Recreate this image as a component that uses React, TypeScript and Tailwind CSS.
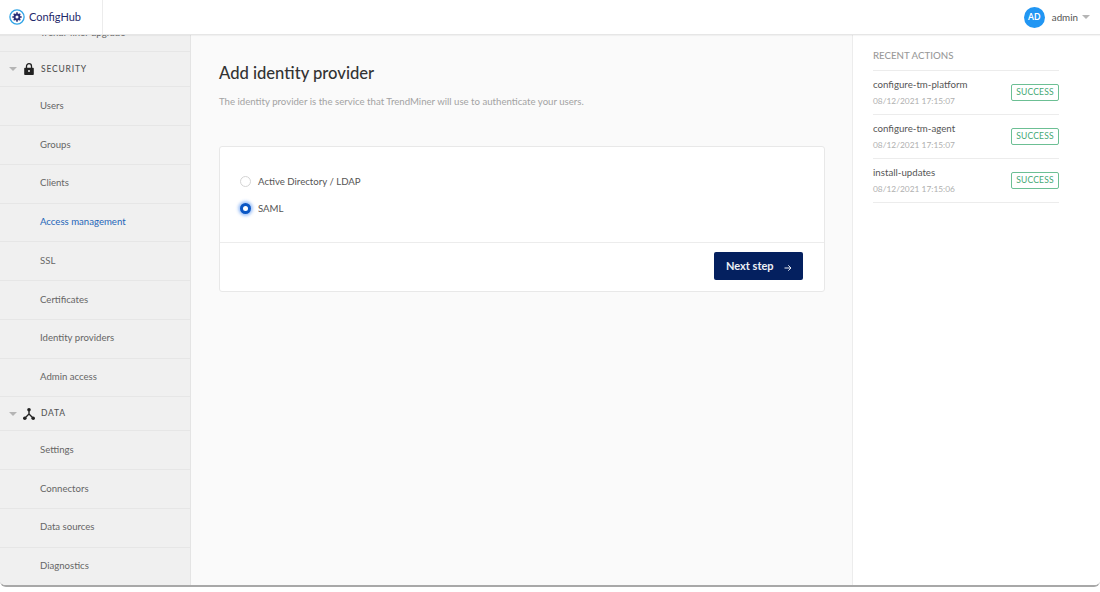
const font = "font-['Lato','Liberation_Sans',sans-serif]";

function Caret() {
  return <span className="h-0 w-0 border-x-[4px] border-t-[4px] border-x-transparent border-t-[#b5b5b5]" />;
}

function LogoIcon() {
  return (
    <svg width="16" height="16" viewBox="0 0 16 16">
      <circle cx="8" cy="8" r="7.100" fill="none" stroke="#2fa4e7" strokeWidth="1.300" />
      <path d="M8 3.300v9.400M3.300 8h9.400M4.700 4.700l6.600 6.600M11.300 4.700l-6.600 6.600" stroke="#2a2f78" strokeWidth="1.500" />
      <circle cx="8" cy="8" r="3.400" fill="#2a2f78" />
      <circle cx="8" cy="8" r="1.500" fill="#fff" />
    </svg>
  );
}

function LockIcon() {
  return (
    <svg width="10" height="12" viewBox="0 0 10 12">
      <path d="M2.500 5V3.200a2.500 2.500 0 0 1 5 0V5" fill="none" stroke="#222" strokeWidth="1.300" />
      <path fillRule="evenodd" d="M1 4.800h8a.8.8 0 0 1 .8.8v5.600a.8.8 0 0 1-.8.8H1a.8.8 0 0 1-.8-.8V5.600a.8.8 0 0 1 .8-.8zM5 7a1 1 0 1 0 0 2 1 1 0 0 0 0-2z" fill="#222" />
    </svg>
  );
}

function DataIcon() {
  return (
    <svg width="12" height="12" viewBox="0 0 12 12">
      <path d="M6 2v4L2 10M6 6l4 4" fill="none" stroke="#222" strokeWidth="1.400" />
      <circle cx="6" cy="1.800" r="1.800" fill="#222" />
      <circle cx="1.800" cy="10.200" r="1.800" fill="#222" />
      <circle cx="10.200" cy="10.200" r="1.800" fill="#222" />
    </svg>
  );
}

function SectionRow({ label, icon, className }: { label: string; icon: React.ReactNode; className: string }) {
  return (
    <div className={`flex items-center border-b border-[#e6e6e6] pl-[9px] ${className}`}>
      <Caret />
      <span className="ml-[4px] flex w-[16px] justify-center">{icon}</span>
      <span className="ml-[4px] text-[8.500px] font-medium tracking-[0.8px] text-[#555]">{label}</span>
    </div>
  );
}

function NavRow({ label, active, className }: { label: string; active?: boolean; className?: string }) {
  return (
    <div
      className={`flex h-[38.750px] items-center border-b border-[#e6e6e6] pl-[40px] text-[9.600px] ${active ? "text-[#1f66b8]" : "text-[#666]"} ${className ?? ""}`}
    >
      {label}
    </div>
  );
}

function Sidebar() {
  return (
    <aside className="w-[191px] shrink-0 overflow-hidden border-r border-[#e4e4e4] bg-[#f0f0f0]">
      <div className="-mt-[21.500px]">
        <NavRow label="TrendMiner upgrade" className="pt-[2px]" />
        <SectionRow label="SECURITY" icon={<LockIcon />} className="h-[35px]" />
        {["Users", "Groups", "Clients"].map((l) => (
          <NavRow key={l} label={l} />
        ))}
        <NavRow label="Access management" active />
        {["SSL", "Certificates", "Identity providers", "Admin access"].map((l) => (
          <NavRow key={l} label={l} />
        ))}
        <SectionRow label="DATA" icon={<DataIcon />} className="h-[34px]" />
        {["Settings", "Connectors", "Data sources", "Diagnostics"].map((l) => (
          <NavRow key={l} label={l} />
        ))}
      </div>
    </aside>
  );
}

function RadioRow({ label, checked }: { label: string; checked?: boolean }) {
  return (
    <div className="flex h-[27px] items-center">
      {checked ? (
        <span className="flex h-[11px] w-[11px] items-center justify-center rounded-full bg-[#0b57c4] shadow-[0_0_3px_2px_rgba(60,130,240,0.45)]">
          <span className="h-[5px] w-[5px] rounded-full bg-white" />
        </span>
      ) : (
        <span className="h-[11px] w-[11px] rounded-full border border-[#d4d4d4] bg-white" />
      )}
      <span className="ml-[7px] text-[9.650px] text-[#555]">{label}</span>
    </div>
  );
}

function Main() {
  return (
    <main className="flex-1 bg-[#fafafa] pl-[28px] pt-[28px]">
      <h1 className="text-[16.600px] leading-[20px] font-medium text-[#333]">Add identity provider</h1>
      <p className="mt-[11px] mb-[38px] text-[9.630px] leading-[14px] text-[#a3a3a3]">
        The identity provider is the service that TrendMiner will use to authenticate your users.
      </p>
      <div className="w-[606px] rounded-[3px] border border-[#e8e8e8] bg-white">
        <div className="h-[96px] border-b border-[#ececec] pl-[20px] pt-[21px]">
          <RadioRow label="Active Directory / LDAP" />
          <RadioRow label="SAML" checked />
        </div>
        <div className="flex h-[48px] items-start justify-end pr-[21px] pt-[9px]">
          <button className="flex h-[28px] w-[89px] items-center rounded-[2px] bg-[#04205f] pl-[12px] pt-[1px] text-[11px] font-bold text-[#eef1f6]">
            Next step
            <svg className="ml-[10px] mt-[3px]" width="8" height="8" viewBox="0 0 8 8">
              <path d="M0.500 4h6.500M4.300 1.300 7 4 4.300 6.700" fill="none" stroke="#e6eaf2" strokeWidth="1" />
            </svg>
          </button>
        </div>
      </div>
    </main>
  );
}

function ActionRow({ name, time }: { name: string; time: string }) {
  return (
    <div className="flex h-[44px] items-center justify-between border-t border-[#ececec]">
      <div className="-mt-[1px]">
        <div className="text-[9.700px] leading-[14px] text-[#555]">{name}</div>
        <div className="mt-[4px] text-[8.400px] leading-[12px] text-[#b0b0b0]">{time}</div>
      </div>
      <span className="flex h-[17px] w-[48px] items-center justify-center rounded-[2px] border border-[#6cbf94] text-[8.500px] tracking-[0.2px] text-[#44a873]">
        SUCCESS
      </span>
    </div>
  );
}

function RecentActions() {
  return (
    <aside className="w-[248px] shrink-0 border-l border-[#ececec] bg-white pl-[20px] pr-[41px] pt-[13px]">
      <div className="mb-[8px] text-[9.700px] leading-[14px] font-medium text-[#9a9a9a]">RECENT ACTIONS</div>
      <ActionRow name="configure-tm-platform" time="08/12/2021 17:15:07" />
      <ActionRow name="configure-tm-agent" time="08/12/2021 17:15:07" />
      <ActionRow name="install-updates" time="08/12/2021 17:15:06" />
      <div className="border-t border-[#ececec]" />
    </aside>
  );
}

export default function App() {
  return (
    <div className={`h-[592px] w-[1100px] overflow-hidden bg-white ${font}`}>
      <div className="flex h-[587px] flex-col overflow-hidden rounded-b-[6px] border-b-2 border-[#a8a8a8]">
        <header className="relative z-10 flex h-[35px] shrink-0 items-center justify-between border-b border-[#e6e6e6] bg-white shadow-[0_1px_1px_rgba(0,0,0,0.04)]">
          <div className="flex h-full w-[103px] items-center border-r border-[#ececec] pl-[9px]">
            <LogoIcon />
            <span className="ml-[4px] text-[11px] text-[#1f2a6b]">ConfigHub</span>
          </div>
          <div className="flex items-center pr-[10px]">
            <span className="flex h-[21px] w-[21px] items-center justify-center rounded-full bg-[#2196f3] text-[8.500px] font-bold text-white">
              AD
            </span>
            <span className="ml-[7px] mr-[4px] text-[9.800px] text-[#555]">admin</span>
            <Caret />
          </div>
        </header>
        <div className="flex min-h-0 flex-1">
          <Sidebar />
          <Main />
          <RecentActions />
        </div>
      </div>
    </div>
  );
}
